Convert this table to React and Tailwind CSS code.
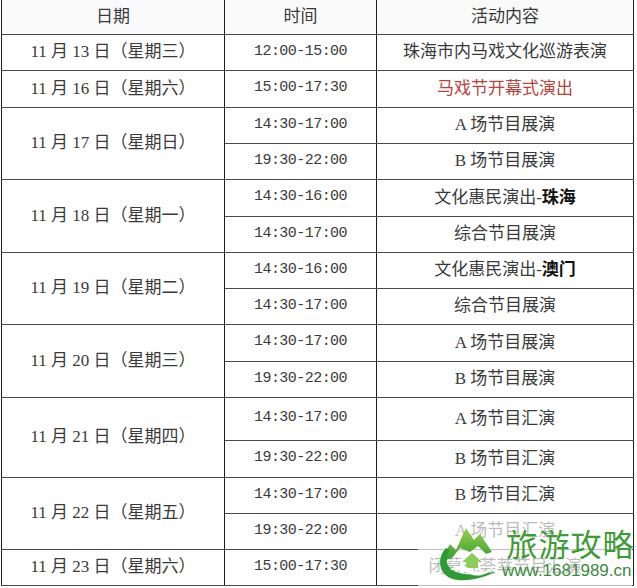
import React from 'react';

const serif = { fontFamily: '"Liberation Serif", "Noto Sans CJK SC", serif' };
const mono = { fontFamily: '"Liberation Mono", "Noto Sans CJK SC", monospace' };

const groups = [
  { date: '11 月 13 日（星期三）', items: [{ time: '12:00-15:00', act: '珠海市内马戏文化巡游表演', h: 'h-[36px]' }] },
  { date: '11 月 16 日（星期六）', items: [{ time: '15:00-17:30', act: <span className="text-[#b8423c]">马戏节开幕式演出</span>, h: 'h-[37px]' }] },
  {
    date: '11 月 17 日（星期日）',
    items: [
      { time: '14:30-17:00', act: 'A 场节目展演', h: 'h-[36px]' },
      { time: '19:30-22:00', act: 'B 场节目展演', h: 'h-[36px]' },
    ],
  },
  {
    date: '11 月 18 日（星期一）',
    items: [
      { time: '14:30-16:00', act: <>文化惠民演出-<b className="font-bold text-[#111]">珠海</b></>, h: 'h-[37px]' },
      { time: '14:30-17:00', act: '综合节目展演', h: 'h-[36px]' },
    ],
  },
  {
    date: '11 月 19 日（星期二）',
    items: [
      { time: '14:30-16:00', act: <>文化惠民演出-<b className="font-bold text-[#111]">澳门</b></>, h: 'h-[36px]' },
      { time: '14:30-17:00', act: '综合节目展演', h: 'h-[36px]' },
    ],
  },
  {
    date: '11 月 20 日（星期三）',
    items: [
      { time: '14:30-17:00', act: 'A 场节目展演', h: 'h-[37px]' },
      { time: '19:30-22:00', act: 'B 场节目展演', h: 'h-[36px]' },
    ],
  },
  {
    date: '11 月 21 日（星期四）',
    items: [
      { time: '14:30-17:00', act: 'A 场节目汇演', h: 'h-[43px]' },
      { time: '19:30-22:00', act: 'B 场节目汇演', h: 'h-[37px]' },
    ],
  },
  {
    date: '11 月 22 日（星期五）',
    items: [
      { time: '14:30-17:00', act: 'B 场节目汇演', h: 'h-[36px]' },
      { time: '19:30-22:00', act: 'A 场节目汇演', h: 'h-[36px]' },
    ],
  },
  { date: '11 月 23 日（星期六）', items: [{ time: '15:00-17:30', act: '闭幕式荟萃节目汇演', h: 'h-[36px]' }] },
];

const cell = 'border-x border-x-[#1e1e1e] border-y border-y-[#4a4a4a] text-center align-middle p-0';

const Logo = () => (
  <svg width="68" height="60" viewBox="0 0 68 60">
    <defs>
      <linearGradient id="mt" x1="0" y1="0" x2="0" y2="1">
        <stop offset="0" stopColor="#9ad04a" />
        <stop offset="1" stopColor="#2f9a34" />
      </linearGradient>
    </defs>
    {/* mountains */}
    <path d="M4 40 L14 22 L20 28 L30 6 L38 18 L44 12 L56 30 L50 32 L42 24 L34 30 L24 26 L16 36 Z" fill="url(#mt)" />
    {/* big swoosh */}
    <path d="M10 26 C0 36 2 56 22 58 C34 59 46 56 60 50 C46 52 30 54 20 50 C10 46 8 36 14 28 Z" fill="#2c9a35" />
    {/* house / arrow */}
    <path d="M26 40 L36 31 L46 40 L42 40 L42 46 L30 46 L30 40 Z" fill="#8bcf5a" />
    {/* white swirl */}
    <path d="M14 48 C20 42 30 44 36 48 C42 52 52 50 58 44 C54 52 42 56 34 52 C28 49 22 47 14 48 Z" fill="#ffffff" />
  </svg>
);

export default function App() {
  return (
    <div className="w-[637px] h-[588px] bg-white overflow-hidden pl-px relative">
      <table className="table-fixed border-collapse w-[632px] text-[#3a3a3a]" style={serif}>
        <colgroup>
          <col className="w-[223px]" />
          <col className="w-[152px]" />
          <col className="w-[257px]" />
        </colgroup>
        <thead>
          <tr className="h-[34px] bg-[#fafafa]">
            <th className={`${cell} border-t-0 font-normal text-[17px]`}>日期</th>
            <th className={`${cell} border-t-0 font-normal text-[17px]`}>时间</th>
            <th className={`${cell} border-t-0 font-normal text-[17px]`}>活动内容</th>
          </tr>
        </thead>
        <tbody>
          {groups.map((g) =>
            g.items.map((it, i) => (
              <tr key={g.date + i} className={it.h}>
                {i === 0 && (
                  <td rowSpan={g.items.length} className={`${cell} text-[17px] whitespace-nowrap`}>
                    {g.date}
                  </td>
                )}
                <td className={`${cell} text-[15px] tracking-[-0.55px]`} style={mono}>
                  {it.time}
                </td>
                <td className={`${cell} text-[17px] whitespace-nowrap`}>{it.act}</td>
              </tr>
            ))
          )}
        </tbody>
      </table>

      {/* watermark */}
      <div className="absolute left-[418px] top-[514px] w-[214px] h-[72px] bg-white/65" />
      <div className="absolute left-[436px] top-[522px] flex items-end">
        <Logo />
        <div className="flex flex-col items-end -ml-[2px]">
          <span
            className="text-[31px] leading-[34px] text-[#3e9c36] tracking-[1px]"
            style={{ fontFamily: '"Noto Sans CJK SC", sans-serif' }}
          >
            旅游攻略
          </span>
          <span
            className="text-[17px] leading-[22px] text-[#3a8a3c] mr-[3px]"
            style={{ fontFamily: '"Liberation Sans Narrow", "Liberation Sans", sans-serif' }}
          >
            www.1681989.cn
          </span>
        </div>
      </div>
    </div>
  );
}
